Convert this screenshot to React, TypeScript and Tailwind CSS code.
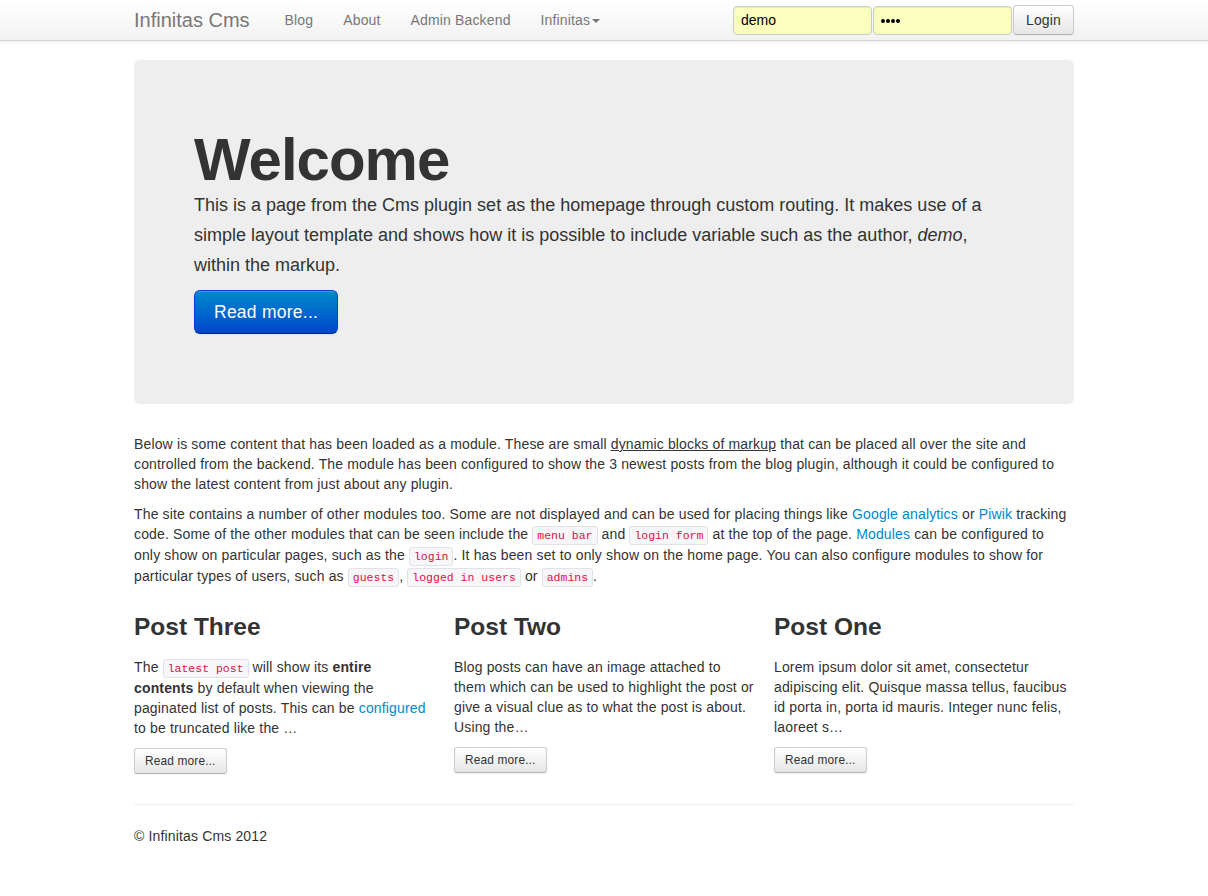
import React from "react";

const Code = ({ children }: { children: React.ReactNode }) => (
  <code className="whitespace-nowrap rounded-[3px] border border-[#e1e1e8] bg-[#f7f7f9] px-[4px] py-[2px] font-['Liberation_Mono',monospace] text-[11.5px] leading-[18px] tracking-normal text-[#dd1144]">
    {children}
  </code>
);

const SmallBtn = () => (
  <p className="mb-[10px]">
    <a className="inline-block cursor-pointer rounded-[3px] border border-[#cccccc] border-b-[#b3b3b3] bg-gradient-to-b from-white to-[#e6e6e6] px-[10px] py-[2px] text-[11.9px] leading-[20px] text-[#333] shadow-[inset_0_1px_0_rgba(255,255,255,0.2),0_1px_2px_rgba(0,0,0,0.05)]">
      Read more...
    </a>
  </p>
);

export default function App() {
  return (
    <div className="min-h-[896px] bg-white font-['Liberation_Sans',Arial,sans-serif] text-[14px] leading-[20px] tracking-[0.15px] text-[#333]">
      {/* Navbar */}
      <div className="h-[41px] border-b border-[#d4d4d4] bg-gradient-to-b from-white to-[#f2f2f2] shadow-[0_1px_4px_rgba(0,0,0,0.065)]">
        <div className="mx-auto flex w-[940px] items-start">
          <a className="py-[10px] pr-[20px] text-[20px] leading-[20px] tracking-normal text-[#777]">Infinitas Cms</a>
          <ul className="flex">
            <li><a className="block px-[15px] py-[10px] text-[#777]">Blog</a></li>
            <li><a className="block px-[15px] py-[10px] text-[#777]">About</a></li>
            <li><a className="block px-[15px] py-[10px] text-[#777]">Admin Backend</a></li>
            <li>
              <a className="flex items-center px-[15px] py-[10px] text-[#777]">
                Infinitas
                <span className="ml-[2px] mt-[1px] inline-block h-0 w-0 border-x-[4px] border-t-[4px] border-x-transparent border-t-[#777]" />
              </a>
            </li>
          </ul>
          <div className="ml-auto mt-[5px] flex items-start gap-[1px]">
            <div className="mt-[1px] box-border h-[29px] w-[139px] rounded-[4px] border border-[#cccccc] bg-[#faffbd] px-[7px] text-[14px] leading-[27px] tracking-normal text-black shadow-[inset_0_1px_1px_rgba(0,0,0,0.075)]">
              demo
            </div>
            <div className="mt-[1px] box-border flex h-[29px] w-[139px] items-center gap-[1px] rounded-[4px] border border-[#cccccc] bg-[#faffbd] px-[7px] shadow-[inset_0_1px_1px_rgba(0,0,0,0.075)]">
              {[0, 1, 2, 3].map((i) => (
                <span key={i} className="inline-block h-[4px] w-[4px] rounded-full bg-black" />
              ))}
            </div>
            <button className="box-border h-[30px] w-[61px] rounded-[4px] border border-[#cccccc] border-b-[#b3b3b3] bg-gradient-to-b from-white to-[#e6e6e6] text-[14px] leading-[20px] text-[#333] shadow-[inset_0_1px_0_rgba(255,255,255,0.2),0_1px_2px_rgba(0,0,0,0.05)]">
              Login
            </button>
          </div>
        </div>
      </div>

      <div className="mx-auto w-[940px] pt-[19px]">
        {/* Hero */}
        <div className="mb-[30px] rounded-[6px] bg-[#eeeeee] p-[60px]">
          <h1 className="mt-[10px] text-[60px] font-bold leading-[60px] tracking-[-1px] text-[#333]">Welcome</h1>
          <p className="mb-[10px] text-[18px] leading-[30px] tracking-normal text-[#333]">
            This is a page from the Cms plugin set as the homepage through custom routing. It makes use of a simple layout template and shows how it is possible to include variable such as the author, <em>demo</em>, within the markup.
          </p>
          <p className="mb-[10px]">
            <a className="inline-block rounded-[6px] border border-[#0044cc] border-b-[#002a80] bg-gradient-to-b from-[#0088cc] to-[#0044cc] px-[19px] py-[11px] text-[17.5px] leading-[20px] tracking-[0.25px] text-white shadow-[inset_0_1px_0_rgba(255,255,255,0.2),0_1px_2px_rgba(0,0,0,0.05)]">
              Read more...
            </a>
          </p>
        </div>

        <p className="mb-[10px]">
          Below is some content that has been loaded as a module. These are small <span className="underline">dynamic blocks of markup</span> that can be placed all over the site and controlled from the backend. The module has been configured to show the 3 newest posts from the blog plugin, although it could be configured to show the latest content from just about any plugin.
        </p>
        <p className="mb-[10px]">
          The site contains a number of other modules too. Some are not displayed and can be used for placing things like <a className="text-[#0088cc]">Google analytics</a> or <a className="text-[#0088cc]">Piwik</a> tracking code. Some of the other modules that can be seen include the <Code>menu bar</Code> and <Code>login form</Code> at the top of the page. <a className="text-[#0088cc]">Modules</a> can be configured to only show on particular pages, such as the <Code>login</Code>. It has been set to only show on the home page. You can also configure modules to show for particular types of users, such as <Code>guests</Code>, <Code>logged in users</Code> or <Code>admins</Code>.
        </p>

        <div className="flex gap-[20px]">
          <div className="w-[300px]">
            <h3 className="my-[10px] text-[24.5px] font-bold leading-[40px] tracking-normal">Post Three</h3>
            <p className="mb-[10px]">
              The <Code>latest post</Code> will show its <strong>entire contents</strong> by default when viewing the paginated list of posts. This can be <a className="text-[#0088cc]">configured</a> to be truncated like the …
            </p>
            <SmallBtn />
          </div>
          <div className="w-[300px]">
            <h3 className="my-[10px] text-[24.5px] font-bold leading-[40px] tracking-normal">Post Two</h3>
            <p className="mb-[10px]">
              Blog posts can have an image attached to them which can be used to highlight the post or give a visual clue as to what the post is about. Using the…
            </p>
            <SmallBtn />
          </div>
          <div className="w-[300px]">
            <h3 className="my-[10px] text-[24.5px] font-bold leading-[40px] tracking-normal">Post One</h3>
            <p className="mb-[10px]">
              Lorem ipsum dolor sit amet, consectetur adipiscing elit. Quisque massa tellus, faucibus id porta in, porta id mauris. Integer nunc felis, laoreet s…
            </p>
            <SmallBtn />
          </div>
        </div>

        <hr className="my-[20px] border-0 border-t border-b border-t-[#eeeeee] border-b-white" />
        <footer>
          <p>© Infinitas Cms 2012</p>
        </footer>
      </div>
    </div>
  );
}
